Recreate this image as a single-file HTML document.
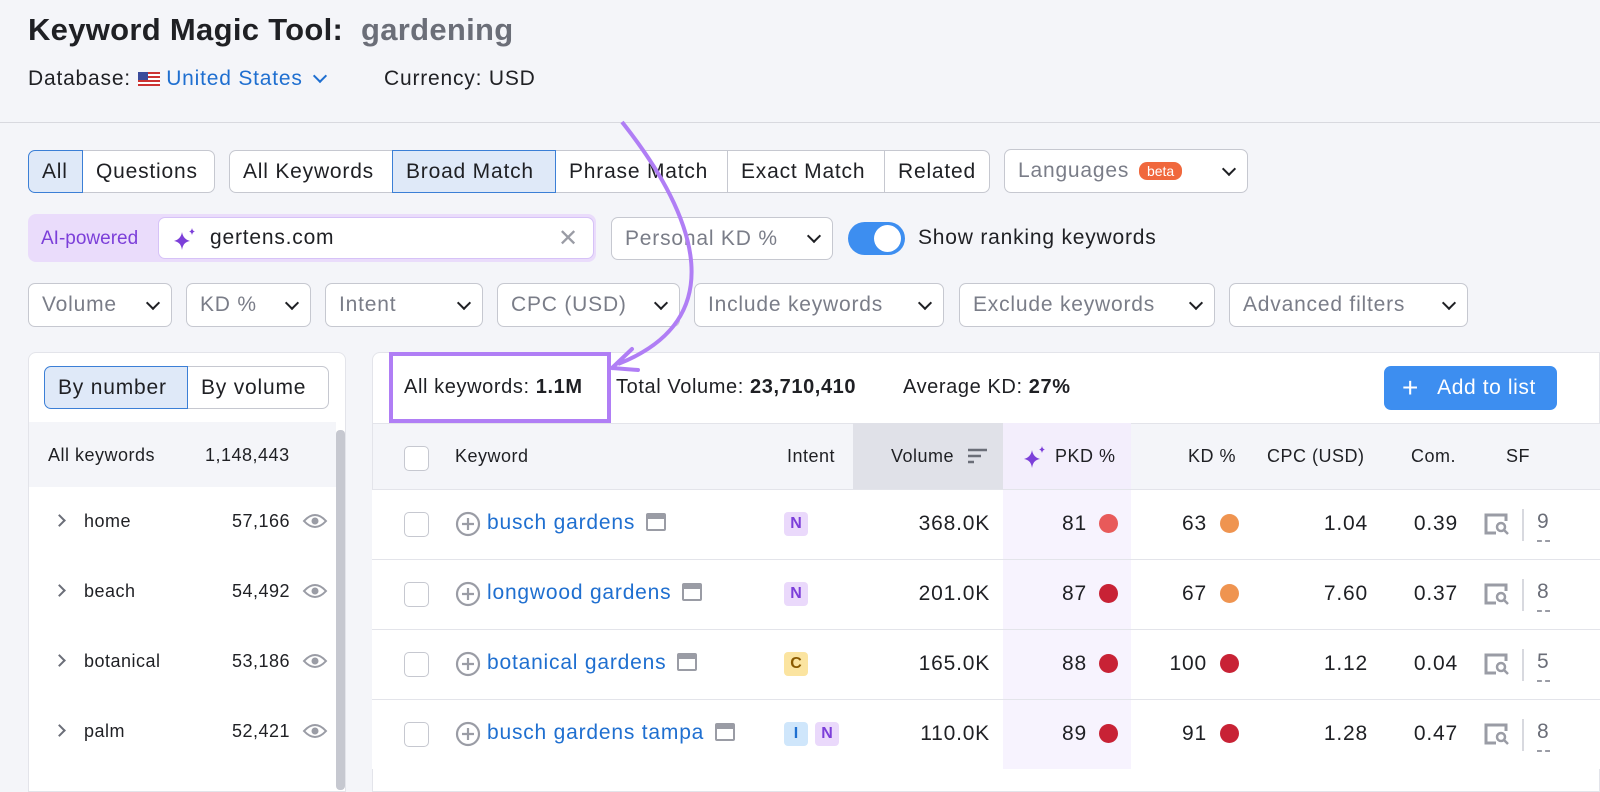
<!DOCTYPE html><html><head><style>
*{box-sizing:border-box;margin:0;padding:0}
body{width:1600px;height:786px;overflow:hidden;background:#f4f5f9;font-family:"Liberation Sans",sans-serif;color:#1f2024;position:relative}
.a{position:absolute}
.btn{position:absolute;height:43px;border:1px solid #c6c8d0;background:#fff;font-size:21px;display:flex;align-items:center;padding:0 13px;white-space:nowrap;letter-spacing:0.8px}
.sel{background:#dfe9f8;border-color:#3b7fd6;z-index:1}
.dd{position:absolute;height:44px;border:1px solid #c6c8d0;background:#fff;border-radius:7px;font-size:21px;color:#7a7d88;display:flex;align-items:center;padding:0 13px;justify-content:space-between;letter-spacing:0.8px}
.chev{width:10px;height:10px;border-right:2.5px solid #1f2024;border-bottom:2.5px solid #1f2024;transform:rotate(45deg);margin-top:-5px;margin-left:12px}
.row{position:absolute;left:372px;width:1228px;height:70px;background:#fff;border-top:1px solid #e3e4ea}
.cb{position:absolute;width:25px;height:25px;border:1.5px solid #c6c8d0;border-radius:5px;background:#fff}
.t{position:absolute;font-size:21px;white-space:nowrap;letter-spacing:0.8px}
.dot{position:absolute;width:19px;height:19px;border-radius:50%}
.badge{position:absolute;width:24px;height:24px;border-radius:4px;font-size:16px;font-weight:bold;text-align:center;line-height:24px}
</style></head><body>
<div class="t" style="left:28px;top:12px;font-size:31px;font-weight:bold;letter-spacing:0.3px">Keyword Magic Tool:&nbsp; <span style="color:#6b6e78">gardening</span></div>
<div class="t" style="left:28px;top:67px">Database: <span style="display:inline-block;width:22px;height:14px;background:repeating-linear-gradient(#c33 0 2px,#fff 2px 4px);position:relative;top:1px"><span style="position:absolute;left:0;top:0;width:10px;height:8px;background:#3b4c9b"></span></span> <span style="color:#1f6fd0">United States</span> <span style="display:inline-block;width:10px;height:10px;border-right:2.5px solid #1f6fd0;border-bottom:2.5px solid #1f6fd0;transform:rotate(45deg);position:relative;top:-4px;left:6px"></span></div>
<div class="t" style="left:384px;top:67px">Currency: USD</div>
<div class="a" style="left:0;top:122px;width:1600px;height:1px;background:#d8d9df"></div>

<div class="btn sel" style="left:28px;top:150px;width:55px;border-radius:7px 0 0 7px">All</div>
<div class="btn" style="left:82px;top:150px;width:133px;border-radius:0 7px 7px 0">Questions</div>
<div class="btn" style="left:229px;top:150px;width:164px;border-radius:7px 0 0 7px">All Keywords</div>
<div class="btn sel" style="left:392px;top:150px;width:164px">Broad Match</div>
<div class="btn" style="left:555px;top:150px;width:173px">Phrase Match</div>
<div class="btn" style="left:727px;top:150px;width:158px">Exact Match</div>
<div class="btn" style="left:884px;top:150px;width:106px;border-radius:0 7px 7px 0">Related</div>
<div class="dd" style="left:1004px;top:149px;width:244px">Languages <span style="background:#f0683d;color:#fff;font-size:14px;border-radius:8px;padding:1px 8px;margin-left:-20px;letter-spacing:0">beta</span><span class="chev"></span></div>

<div class="a" style="left:28px;top:214px;width:568px;height:48px;background:#eadcfb;border-radius:8px"></div>
<div class="t" style="left:41px;top:228px;font-size:19px;color:#7c3fd9;letter-spacing:0">AI-powered</div>
<div class="a" style="left:158px;top:217px;width:436px;height:42px;background:#fff;border:1.5px solid #d6c2f7;border-radius:7px"></div>
<svg class="a" style="left:172px;top:226px" width="26" height="26" viewBox="0 0 26 26"><path d="M10 6 Q11 13 18 15 Q11 16 10 24 Q9 16 2 15 Q9 13 10 6Z M20 2 Q20.5 5 23 5.5 Q20.5 6 20 9 Q19.5 6 17 5.5 Q19.5 5 20 2Z" fill="#7c3fd9"/></svg>
<div class="t" style="left:210px;top:226px">gertens.com</div>
<div class="t" style="left:558px;top:224px;color:#9a9ca5;font-size:24px">✕</div>
<div class="dd" style="left:611px;top:217px;width:222px;height:43px">Personal KD %<span class="chev"></span></div>
<div class="a" style="left:848px;top:222px;width:57px;height:33px;background:#3d8ef0;border-radius:17px"></div>
<div class="a" style="left:874px;top:225px;width:27px;height:27px;background:#fff;border-radius:50%"></div>
<div class="t" style="left:918px;top:226px;color:#1f2024">Show ranking keywords</div>

<div class="dd" style="left:28px;top:283px;width:144px">Volume<span class="chev"></span></div>
<div class="dd" style="left:186px;top:283px;width:125px">KD %<span class="chev"></span></div>
<div class="dd" style="left:325px;top:283px;width:158px">Intent<span class="chev"></span></div>
<div class="dd" style="left:497px;top:283px;width:183px">CPC (USD)<span class="chev"></span></div>
<div class="dd" style="left:694px;top:283px;width:250px">Include keywords<span class="chev"></span></div>
<div class="dd" style="left:959px;top:283px;width:256px">Exclude keywords<span class="chev"></span></div>
<div class="dd" style="left:1229px;top:283px;width:239px">Advanced filters<span class="chev"></span></div>

<div class="a" style="left:28px;top:352px;width:318px;height:440px;background:#fff;border:1px solid #e3e4ea;border-radius:8px 8px 0 0"></div>
<div class="btn sel" style="left:44px;top:366px;width:144px;height:43px;border-radius:7px 0 0 7px">By number</div>
<div class="btn" style="left:187px;top:366px;width:142px;height:43px;border-radius:0 7px 7px 0">By volume</div>
<div class="a" style="left:29px;top:422px;width:307px;height:65px;background:#f4f5f9"></div>
<div class="t" style="left:48px;top:445px;font-size:18px;letter-spacing:0.5px">All keywords</div>
<div class="t" style="left:205px;top:445px;font-size:18px;letter-spacing:0.5px">1,148,443</div>
<div class="a" style="left:336px;top:430px;width:9px;height:360px;background:#c6c8d0;border-radius:4px"></div>
<div id="lp"></div>

<div class="a" style="left:372px;top:352px;width:1228px;height:440px;background:#fff;border:1px solid #e3e4ea;border-radius:8px 0 0 0"></div>
<div class="t" style="left:404px;top:376px;font-size:20px;letter-spacing:0.6px">All keywords: <b>1.1M</b></div>
<div class="a" style="left:389px;top:352px;width:222px;height:71px;border:4px solid #b07ef5"></div>
<div class="t" style="left:616px;top:376px;font-size:20px;letter-spacing:0.6px">Total Volume: <b>23,710,410</b></div>
<div class="t" style="left:903px;top:376px;font-size:20px;letter-spacing:0.6px">Average KD: <b>27%</b></div>
<div class="a" style="left:1384px;top:366px;width:173px;height:44px;background:#3d8ef0;border-radius:7px;color:#fff;font-size:21px;line-height:44px;padding-left:18px;letter-spacing:0.6px"><span style="font-size:28px;vertical-align:-3px">+</span>&nbsp;&nbsp; Add to list</div>

<div class="a" style="left:373px;top:423px;width:1227px;height:66px;background:#f4f5f9;border-top:1px solid #e3e4ea"></div>
<div class="a" style="left:853px;top:423px;width:150px;height:66px;background:#e0e1e8"></div>
<div class="a" style="left:1003px;top:423px;width:128px;height:66px;background:#f3eefc"></div>
<div class="cb" style="left:404px;top:446px"></div>
<div class="t" style="left:455px;top:446px;font-size:18px;letter-spacing:0.5px">Keyword</div>
<div class="t" style="left:787px;top:446px;font-size:18px;letter-spacing:0.5px">Intent</div>
<div class="t" style="left:891px;top:446px;font-size:18px;letter-spacing:0.5px">Volume</div>
<svg class="a" style="left:967px;top:448px" width="22" height="18"><path d="M1 2h19M1 8h13M1 14h6" stroke="#6b6e78" stroke-width="2.5"/></svg>
<svg class="a" style="left:1022px;top:444px" width="26" height="26" viewBox="0 0 26 26"><path d="M10 6 Q11 13 18 15 Q11 16 10 24 Q9 16 2 15 Q9 13 10 6Z M20 2 Q20.5 5 23 5.5 Q20.5 6 20 9 Q19.5 6 17 5.5 Q19.5 5 20 2Z" fill="#7c3fd9"/></svg>
<div class="t" style="left:1055px;top:446px;font-size:18px;letter-spacing:0.5px">PKD %</div>
<div class="t" style="left:1188px;top:446px;font-size:18px;letter-spacing:0.5px">KD %</div>
<div class="t" style="left:1267px;top:446px;font-size:18px;letter-spacing:0.5px">CPC (USD)</div>
<div class="t" style="left:1411px;top:446px;font-size:18px;letter-spacing:0.5px">Com.</div>
<div class="t" style="left:1506px;top:446px;font-size:18px;letter-spacing:0.5px">SF</div>
<div id="rows"></div>

<svg class="a" style="left:0;top:0" width="1600" height="786"><path d="M622 122 C700 220 730 320 618 364" stroke="#b07ef5" stroke-width="4" fill="none"/><path d="M612 368 L632 349 M612 368 L638 370" stroke="#b07ef5" stroke-width="4" fill="none" stroke-linecap="round"/></svg>

<script>
var lp=[["home","57,166"],["beach","54,492"],["botanical","53,186"],["palm","52,421"]],h="";
lp.forEach(function(r,i){var y=521+i*70;h+='<div class="a" style="left:55px;top:'+(y-5)+'px;width:9px;height:9px;border-right:2px solid #6b6e78;border-bottom:2px solid #6b6e78;transform:rotate(-45deg)"></div><div class="t" style="left:84px;top:'+(y-10)+'px;font-size:18px;letter-spacing:0.5px">'+r[0]+'</div><div class="t" style="left:200px;top:'+(y-10)+'px;font-size:18px;width:90px;text-align:right;letter-spacing:0.5px">'+r[1]+'</div><svg class="a" style="left:302px;top:'+(y-9)+'px" width="26" height="18"><path d="M2 9 Q13 -3 24 9 Q13 21 2 9Z" fill="none" stroke="#9a9ca5" stroke-width="2"/><circle cx="13" cy="9" r="3.5" fill="#9a9ca5"/></svg>';});
document.getElementById("lp").outerHTML=h;
var R=[["busch gardens",["N"],"368.0K","81","#e85a5a","63","#ef9450","1.04","0.39","9"],["longwood gardens",["N"],"201.0K","87","#c82235","67","#ef9450","7.60","0.37","8"],["botanical gardens",["C"],"165.0K","88","#c82235","100","#c82235","1.12","0.04","5"],["busch gardens tampa",["I","N"],"110.0K","89","#c82235","91","#c82235","1.28","0.47","8"]],s="";
var bc={N:["#ead9fb","#7c3fd9"],C:["#fbe4a0","#8a5a00"],I:["#cfe6fb","#1f6fd0"]};
R.forEach(function(r,i){var y=489+i*70,c=y+35;
s+='<div class="row" style="top:'+y+'px"></div><div class="a" style="left:1003px;top:'+(y+1)+'px;width:128px;height:69px;background:#f7f3fe"></div>';
s+='<div class="cb" style="left:404px;top:'+(c-12)+'px"></div>';
s+='<svg class="a" style="left:455px;top:'+(c-13)+'px" width="26" height="26"><circle cx="13" cy="13" r="11" fill="none" stroke="#9a9ca5" stroke-width="2.2"/><path d="M13 7v12M7 13h12" stroke="#9a9ca5" stroke-width="2.2"/></svg>';
s+='<div class="t" style="left:487px;top:'+(c-13)+'px;color:#1f6fd0">'+r[0]+' <span style="display:inline-block;width:20px;height:18px;border:2.5px solid #9a9ca5;border-top-width:6px;border-radius:2px;vertical-align:-2px;margin-left:4px"></span></div>';
r[1].forEach(function(b,j){s+='<div class="badge" style="left:'+(784+j*31)+'px;top:'+(c-12)+'px;background:'+bc[b][0]+';color:'+bc[b][1]+'">'+b+'</div>';});
s+='<div class="t" style="left:880px;width:110px;text-align:right;top:'+(c-12)+'px">'+r[2]+'</div>';
s+='<div class="t" style="left:1030px;width:57px;text-align:right;top:'+(c-12)+'px">'+r[3]+'</div><div class="dot" style="left:1099px;top:'+(c-10)+'px;background:'+r[4]+'"></div>';
s+='<div class="t" style="left:1150px;width:57px;text-align:right;top:'+(c-12)+'px">'+r[5]+'</div><div class="dot" style="left:1220px;top:'+(c-10)+'px;background:'+r[6]+'"></div>';
s+='<div class="t" style="left:1290px;width:78px;text-align:right;top:'+(c-12)+'px">'+r[7]+'</div>';
s+='<div class="t" style="left:1380px;width:78px;text-align:right;top:'+(c-12)+'px">'+r[8]+'</div>';
s+='<svg class="a" style="left:1484px;top:'+(c-11)+'px" width="26" height="22"><path d="M22 8V2H2v18h10" fill="none" stroke="#9a9ca5" stroke-width="3"/><circle cx="17" cy="14" r="4" fill="none" stroke="#9a9ca5" stroke-width="2.5"/><path d="M20 17l4 4" stroke="#9a9ca5" stroke-width="2.5"/></svg>';
s+='<div class="a" style="left:1522px;top:'+(c-15)+'px;width:2px;height:32px;background:#d8d9df"></div><div class="t" style="left:1537px;top:'+(c-14)+'px;color:#6b6e78">'+r[9]+'</div><div class="a" style="left:1537px;top:'+(c+16)+'px;width:13px;border-top:2px dashed #9a9ca5"></div>';});
document.getElementById("rows").outerHTML=s;
</script>
</body></html>
